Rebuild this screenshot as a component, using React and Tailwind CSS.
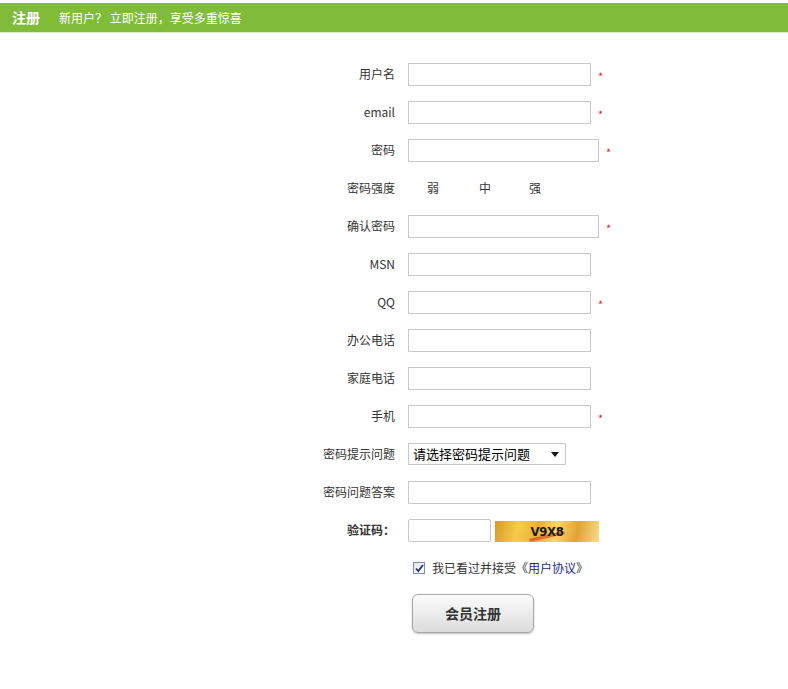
import React from "react";

const font = { fontFamily: '"Noto Sans CJK SC", "Noto Sans", sans-serif' };

function Star() {
  return <span className="ml-[7px] mt-[5px] text-[11px] leading-none text-[#e02020]">*</span>;
}

function Row({ label, bold, children }) {
  return (
    <div className="flex h-[38px] items-center">
      <div className={`w-[395px] pr-0 text-right text-[12px] text-[#333] ${bold ? "font-bold" : ""}`}>
        {label}
      </div>
      <div className="ml-[13px] flex items-center">{children}</div>
    </div>
  );
}

function Field({ wide }) {
  return (
    <input
      type="text"
      className={`h-[23px] border border-[#c8c8c8] bg-white outline-none ${wide ? "w-[191px]" : "w-[183px]"}`}
    />
  );
}

export default function App() {
  const rows = [
    { label: "用户名", star: true },
    { label: "email", star: true },
    { label: "密码", star: true, wide: true },
    { label: "密码强度", strength: true },
    { label: "确认密码", star: true, wide: true },
    { label: "MSN" },
    { label: "QQ", star: true },
    { label: "办公电话" },
    { label: "家庭电话" },
    { label: "手机", star: true },
  ];

  return (
    <div className="min-h-[689px] w-[788px] bg-white" style={font}>
      <div className="pt-[3px]">
        <div className="flex h-[29px] items-center bg-[#80bc3a] pl-[12px] text-white">
          <span className="text-[14px] font-bold">注册</span>
          <span className="ml-[19px] text-[12px]">新用户？ 立即注册，享受多重惊喜</span>
        </div>
        <div className="h-[1px] bg-[#dcebc8]"></div>
      </div>

      <div className="pt-[22px]">
        {rows.map((r) => (
          <Row key={r.label} label={r.label}>
            {r.strength ? (
              <div className="flex text-[12px] text-[#333]">
                <span className="ml-[19px]">弱</span>
                <span className="ml-[40px]">中</span>
                <span className="ml-[38px]">强</span>
              </div>
            ) : (
              <>
                <Field wide={r.wide} />
                {r.star && <Star />}
              </>
            )}
          </Row>
        ))}

        <Row label="密码提示问题">
          <div className="flex h-[22px] w-[158px] items-center justify-between border border-[#c8c8c8] bg-white pl-[4px] pr-[6px] text-[13px] text-black">
            <span>请选择密码提示问题</span>
            <svg width="8" height="5" viewBox="0 0 8 5">
              <path d="M0 0h8L4 5z" fill="#111" />
            </svg>
          </div>
        </Row>

        <Row label="密码问题答案">
          <Field />
        </Row>

        <Row label="验证码：" bold>
          <input
            type="text"
            className="h-[23px] w-[83px] rounded-[2px] border border-[#c8c8c8] bg-white outline-none"
          />
          <div className="relative ml-[4px] mt-[3px] flex h-[21px] w-[104px] items-center justify-center overflow-hidden bg-[linear-gradient(100deg,#d89a28_0%,#f4cc48_22%,#eab038_42%,#f8d868_58%,#e0a432_78%,#f6dc8a_100%)]">
            <div className="absolute left-[34px] top-[14px] h-[3px] w-[36px] rotate-[-12deg] rounded-full bg-[#d03a1a] opacity-60"></div>
            <span className="relative text-[13px] font-bold tracking-[-0.3px] text-[#1a1a1a]" style={{ fontFamily: '"DejaVu Sans Condensed", "DejaVu Sans", sans-serif' }}>
              V9X8
            </span>
          </div>
        </Row>

        <div className="flex h-[38px] items-center pl-[413px] text-[12px] text-[#333]">
          <span className="flex h-[12px] w-[12px] items-center justify-center border border-[#7a8ea8] bg-[linear-gradient(135deg,#dfe6ee,#ffffff)]">
            <svg width="9" height="9" viewBox="0 0 9 9">
              <path d="M1 4.5l2.3 2.5L8 1" fill="none" stroke="#23337a" strokeWidth="1.8" />
            </svg>
          </span>
          <span className="ml-[7px]">
            我已看过并接受《<span className="text-[#1a2a8c]">用户协议</span>》
          </span>
        </div>

        <div className="mt-[7px] pl-[412px]">
          <button className="h-[39px] w-[122px] rounded-[6px] border border-[#a8a8a8] bg-[linear-gradient(#fafafa,#ececec_50%,#dcdcdc)] text-[14px] font-bold text-[#333] shadow-[0_1px_2px_rgba(0,0,0,0.25)]">
            会员注册
          </button>
        </div>
      </div>
    </div>
  );
}
